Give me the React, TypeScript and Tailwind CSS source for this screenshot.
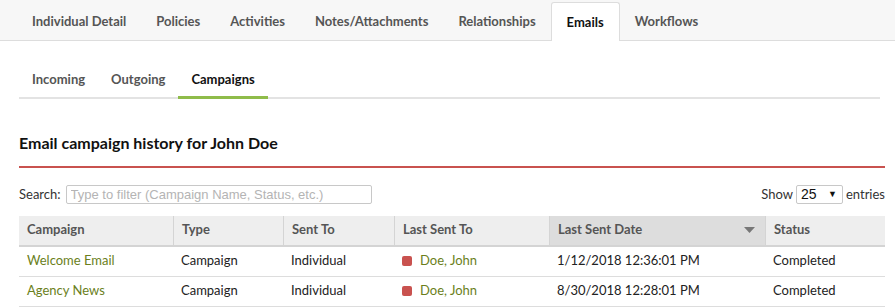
import React from "react";

const mainTabs = [
  "Individual Detail",
  "Policies",
  "Activities",
  "Notes/Attachments",
  "Relationships",
  "Emails",
  "Workflows",
];

const subTabs = ["Incoming", "Outgoing", "Campaigns"];

const columns = [
  { label: "Campaign", w: "w-[154px]" },
  { label: "Type", w: "w-[110px]" },
  { label: "Sent To", w: "w-[111px]" },
  { label: "Last Sent To", w: "w-[155px]" },
  { label: "Last Sent Date", w: "w-[216px]", sorted: true },
  { label: "Status", w: "w-[120px]" },
];

const rows = [
  {
    campaign: "Welcome Email",
    type: "Campaign",
    sentTo: "Individual",
    last: "Doe, John",
    date: "1/12/2018 12:36:01 PM",
    status: "Completed",
  },
  {
    campaign: "Agency News",
    type: "Campaign",
    sentTo: "Individual",
    last: "Doe, John",
    date: "8/30/2018 12:28:01 PM",
    status: "Completed",
  },
];

export default function App() {
  return (
    <div className="w-[895px] h-[307px] bg-white overflow-hidden font-['Lato','Noto_Sans',sans-serif] text-[13px] text-[#222]">
      {/* top tabs */}
      <div className="h-[41px] bg-[#f7f7f7] border-b border-[#dddddd] flex items-end pl-[17px]">
        {mainTabs.map((t) =>
          t === "Emails" ? (
            <div
              key={t}
              className="h-[39px] -mb-px px-[15px] pt-[1px] flex items-center bg-white border border-b-0 border-[#dddddd] rounded-t-[3px] font-bold text-[#111]"
            >
              {t}
            </div>
          ) : (
            <div
              key={t}
              className="h-[39px] px-[15px] pt-[2px] flex items-center font-bold text-[#555]"
            >
              {t}
            </div>
          )
        )}
      </div>

      {/* sub tabs */}
      <div className="mx-[19px] mt-[20px] w-[861px] border-b-2 border-[#e3e3e3] flex">
        {subTabs.map((t) => (
          <div
            key={t}
            className={`h-[38px] -mb-[2px] px-[13px] flex items-center font-bold ${
              t === "Campaigns"
                ? "text-[#111] border-b-[3px] border-[#8fbc4a] pt-[3px]"
                : "text-[#555]"
            }`}
          >
            {t}
          </div>
        ))}
      </div>

      <div className="px-[19px] pt-[33px] w-[904px]">
        <h2 className="text-[16px] font-bold text-[#111] leading-[22px] pb-[12px] border-b-2 border-[#c9524f] w-[866px]">
          Email campaign history for John Doe
        </h2>

        <div className="w-[866px] mt-[17px] flex items-center justify-between">
          <label className="flex items-center gap-[5px] text-[#333]">
            Search:
            <input
              placeholder="Type to filter (Campaign Name, Status, etc.)"
              className="w-[306px] h-[19px] border border-[#c8c8c8] rounded-[2px] px-[4px] text-[13px] font-['Liberation_Sans',sans-serif] placeholder:text-[#b4b4b4] outline-none"
            />
          </label>
          <div className="flex items-center gap-[3px] text-[#333]">
            Show
            <div className="w-[47px] h-[19px] border border-[#c8c8c8] rounded-[2px] flex items-center justify-between pl-[4px] pr-[5px] font-['Liberation_Sans',sans-serif] text-[14px] text-[#111]">
              <span>25</span>
              <span className="text-[9px]">▼</span>
            </div>
            entries
          </div>
        </div>

        <div className="w-[866px] mt-[11px]">
          <div className="flex h-[31px] bg-[#eeeeee] border-b-2 border-[#d4d4d4]">
            {columns.map((c, i) => (
              <div
                key={c.label}
                className={`${c.w} flex items-center justify-between px-[8px] font-bold text-[#555] ${
                  i > 0 ? "border-l border-[#d4d4d4]" : ""
                } ${c.sorted ? "bg-[#dddddd]" : ""}`}
              >
                {c.label}
                {c.sorted && (
                  <svg width="11" height="7" viewBox="0 0 11 7" className="mr-[2px]">
                    <path d="M0 0h11L5.5 6z" fill="#777" />
                  </svg>
                )}
              </div>
            ))}
          </div>
          {rows.map((r) => (
            <div key={r.campaign} className="flex h-[30px] border-b border-[#dddddd] items-center">
              <div className="w-[154px] px-[8px] text-[#6b7f1c]">{r.campaign}</div>
              <div className="w-[110px] px-[8px]">{r.type}</div>
              <div className="w-[111px] px-[8px]">{r.sentTo}</div>
              <div className="w-[155px] px-[8px] flex items-center gap-[8px] text-[#6b7f1c]">
                <span className="w-[10px] h-[10px] rounded-[2px] bg-[#c9524f] inline-block" />
                {r.last}
              </div>
              <div className="w-[216px] px-[8px]">{r.date}</div>
              <div className="w-[120px] px-[8px]">{r.status}</div>
            </div>
          ))}
        </div>
      </div>
    </div>
  );
}
